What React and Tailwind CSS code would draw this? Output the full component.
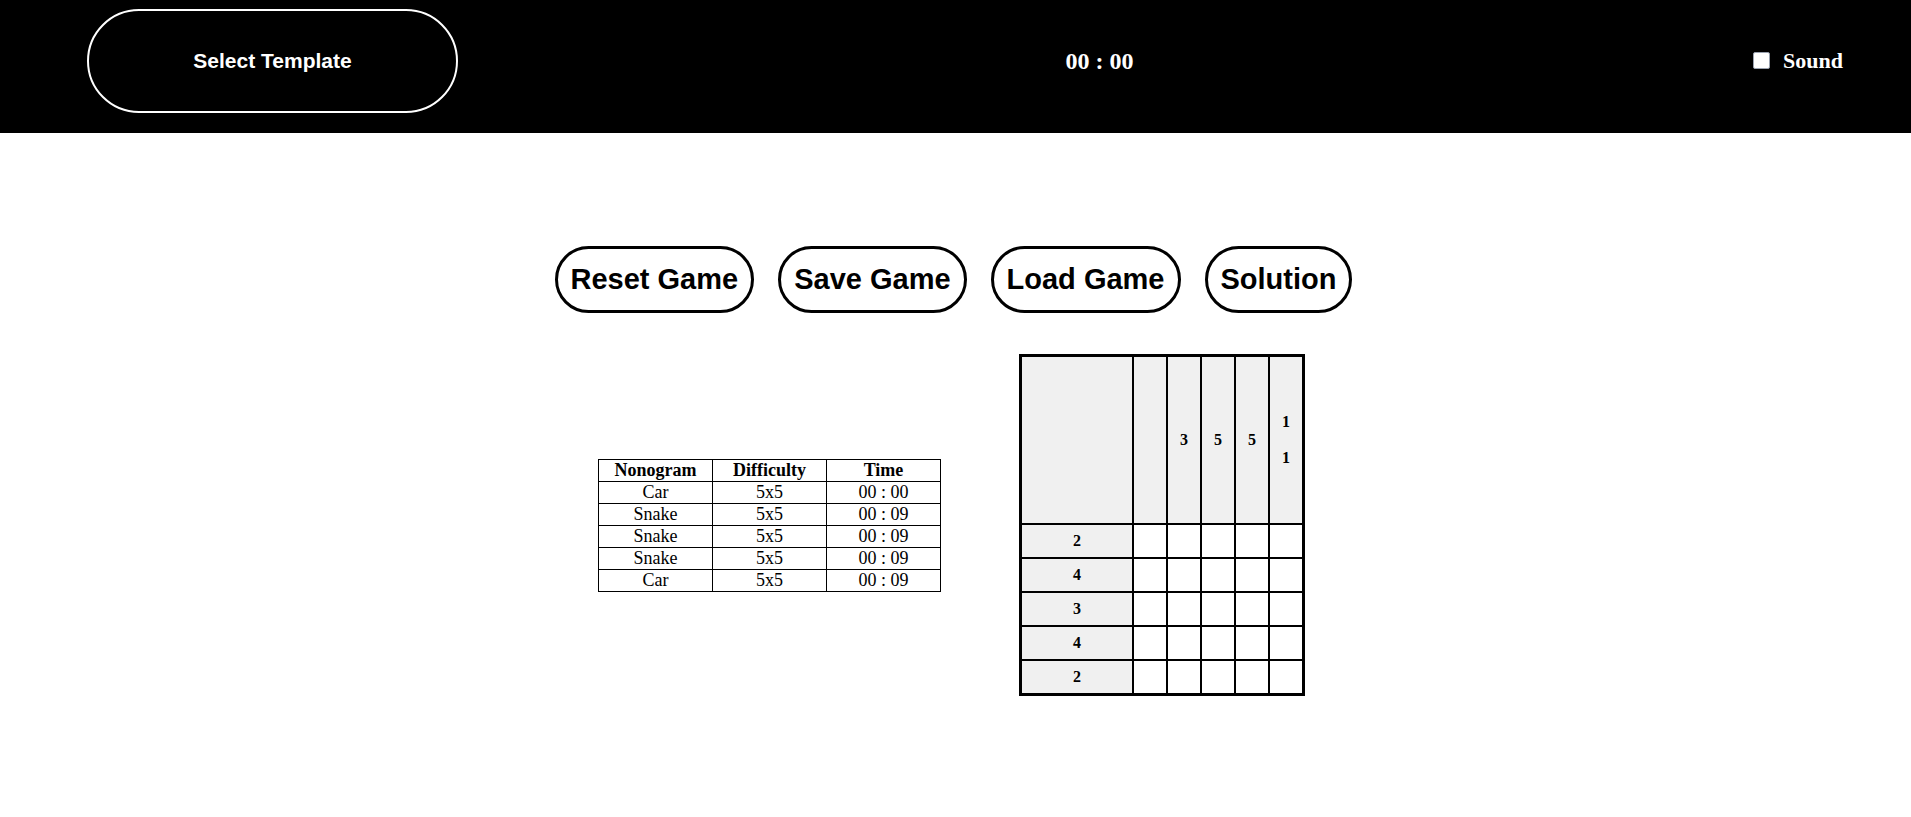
import React, { useState } from 'react';

const HISTORY = [
    { name: "Car", size: "5x5", time: "00 : 00" },
    { name: "Snake", size: "5x5", time: "00 : 09" },
    { name: "Snake", size: "5x5", time: "00 : 09" },
    { name: "Snake", size: "5x5", time: "00 : 09" },
    { name: "Car", size: "5x5", time: "00 : 09" },
];

const COL_CLUES = [[], [3], [5], [5], [1, 1]];
const ROW_CLUES = [2, 4, 3, 4, 2];

const sans = "font-['Liberation_Sans',Arial,sans-serif]";
const serif = "font-['Liberation_Serif','Times_New_Roman',serif]";

export default function App() {
    const [sound, setSound] = useState(false);
    const [cells, setCells] = useState(Array(25).fill(false));

    const toggle = (i) => setCells(prev => prev.map((c, j) => (j === i ? !c : c)));

    return (
        <div className="min-h-screen bg-white">
            {/* Header */}
            <header className="h-[133px] bg-black flex items-center justify-between pl-[87px] pr-[68px] pb-[12px]">
                <button className={`${sans} w-[371px] h-[104px] rounded-full border-2 border-white text-white text-[21px] font-bold`}>
                    Select Template
                </button>
                <div className={`${serif} text-white text-[24px] font-bold mr-[12px]`}>00 : 00</div>
                <label className="flex items-center gap-[13px] cursor-pointer" onClick={() => setSound(!sound)}>
                    <span className="w-[17px] h-[17px] bg-white rounded-[2px] border border-gray-400 flex items-center justify-center text-black text-xs">
                        {sound ? '✓' : ''}
                    </span>
                    <span className={`${serif} text-white text-[22px] font-bold leading-[24px]`}>Sound</span>
                </label>
            </header>

            <main className="flex flex-col items-center">
                <div className="flex gap-[24px] mt-[113px] mr-[4px]">
                    {["Reset Game", "Save Game", "Load Game", "Solution"].map(label => (
                        <button
                            key={label}
                            onClick={() => label === "Reset Game" && setCells(Array(25).fill(false))}
                            className={`${sans} h-[67px] px-[13px] rounded-full border-[3px] border-black bg-white text-black text-[29px] font-bold`}
                        >
                            {label}
                        </button>
                    ))}
                </div>

                <div className="flex items-center gap-[78px] mt-[41px] mr-[8px]">
                    {/* Score table */}
                    <table className={`${serif} w-[343px] table-fixed border-collapse border border-black text-[18px] text-black text-center`}>
                        <thead>
                            <tr>
                                <th className="border border-black p-0 leading-[21px] font-bold">Nonogram</th>
                                <th className="border border-black p-0 leading-[21px] font-bold">Difficulty</th>
                                <th className="border border-black p-0 leading-[21px] font-bold">Time</th>
                            </tr>
                        </thead>
                        <tbody>
                            {HISTORY.map((row, i) => (
                                <tr key={i}>
                                    <td className="border border-black p-0 leading-[21px]">{row.name}</td>
                                    <td className="border border-black p-0 leading-[21px]">{row.size}</td>
                                    <td className="border border-black p-0 leading-[21px]">{row.time}</td>
                                </tr>
                            ))}
                        </tbody>
                    </table>

                    {/* Puzzle board */}
                    <div className={`${serif} grid grid-cols-[110px_repeat(5,32px)] grid-rows-[166px_repeat(5,32px)] gap-[2px] bg-black border-[3px] border-black text-[16px] font-bold text-black`}>
                        <div className="bg-[#f0f0f0]"></div>
                        {COL_CLUES.map((clue, i) => (
                            <div key={i} className="bg-[#f0f0f0] flex flex-col items-center justify-center gap-[18px] leading-[18px]">
                                {clue.map((n, j) => <span key={j}>{n}</span>)}
                            </div>
                        ))}
                        {ROW_CLUES.map((clue, r) => (
                            <React.Fragment key={r}>
                                <div className="bg-[#f0f0f0] flex items-center justify-center">{clue}</div>
                                {[0, 1, 2, 3, 4].map(c => (
                                    <div
                                        key={c}
                                        onClick={() => toggle(r * 5 + c)}
                                        className={cells[r * 5 + c] ? "bg-black" : "bg-white"}
                                    ></div>
                                ))}
                            </React.Fragment>
                        ))}
                    </div>
                </div>
            </main>
        </div>
    );
}
